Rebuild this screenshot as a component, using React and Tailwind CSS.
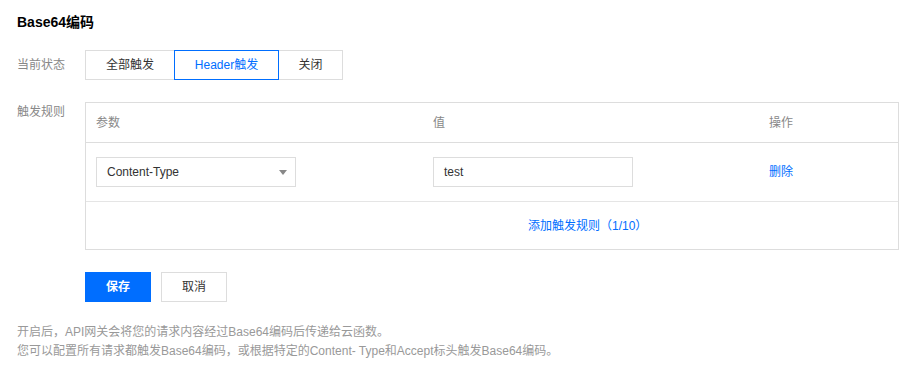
import React from 'react';

const font = { fontFamily: '"Liberation Sans", "Noto Sans CJK SC", sans-serif' };

const modes = ['全部触发', 'Header触发', '关闭'];

const App = () => {
  const active = 1;

  return (
    <div className="min-h-screen bg-white text-[12px] text-[#333] pl-[17px] pt-[12px]" style={font}>
      <h2 className="text-[14px] font-bold text-black leading-[20px]">Base64编码</h2>

      <div className="flex mt-[18px]">
        <div className="w-[68px] shrink-0 text-[#888] leading-[30px]">当前状态</div>
        <div className="flex h-[30px]">
          {modes.map((m, i) => (
            <button
              key={m}
              className={
                'h-[30px] border text-[12px] ' +
                (i === 0 ? 'w-[90px] ' : i === 1 ? 'w-[105px] -ml-px ' : 'w-[65px] -ml-px ') +
                (i === active
                  ? 'border-[#006eff] text-[#006eff] relative z-10'
                  : 'border-[#dddddd] text-[#333]')
              }
            >
              {m}
            </button>
          ))}
        </div>
      </div>

      <div className="flex mt-[22px]">
        <div className="w-[68px] shrink-0 text-[#888] leading-[18px] pt-[1px]">触发规则</div>
        <div className="w-[814px] shrink-0 border border-[#dddddd]">
          <div className="grid grid-cols-[337px_336px_1fr] h-[40px] items-center border-b border-[#dddddd] text-[#888]">
            <div className="pl-[10px]">参数</div>
            <div className="pl-[10px]">值</div>
            <div className="pl-[10px]">操作</div>
          </div>
          <div className="grid grid-cols-[337px_336px_1fr] h-[59px] items-center border-b border-[#e5e5e5]">
            <div className="pl-[10px]">
              <div className="w-[200px] h-[30px] border border-[#dddddd] flex items-center justify-between pl-[10px] pr-[8px]">
                <span>Content-Type</span>
                <svg width="8" height="5" viewBox="0 0 8 5">
                  <path d="M0 0 L8 0 L4 5 Z" fill="#888" />
                </svg>
              </div>
            </div>
            <div className="pl-[10px]">
              <div className="w-[200px] h-[30px] border border-[#dddddd] flex items-center pl-[10px]">test</div>
            </div>
            <div className="pl-[10px]">
              <span className="text-[#006eff] cursor-pointer">删除</span>
            </div>
          </div>
          <div className="h-[47px] flex items-center pl-[442px]">
            <span className="text-[#006eff] cursor-pointer">添加触发规则（1/10）</span>
          </div>
        </div>
      </div>

      <div className="flex gap-[10px] ml-[68px] mt-[22px]">
        <button className="w-[66px] h-[30px] bg-[#006eff] text-white text-[12px] font-bold">保存</button>
        <button className="w-[66px] h-[30px] border border-[#dddddd] text-[#333] text-[12px]">取消</button>
      </div>

      <div className="mt-[21px] text-[#999] leading-[19px]">
        <p>开启后，API网关会将您的请求内容经过Base64编码后传递给云函数。</p>
        <p>您可以配置所有请求都触发Base64编码，或根据特定的Content- Type和Accept标头触发Base64编码。</p>
      </div>
    </div>
  );
};

export default App;
